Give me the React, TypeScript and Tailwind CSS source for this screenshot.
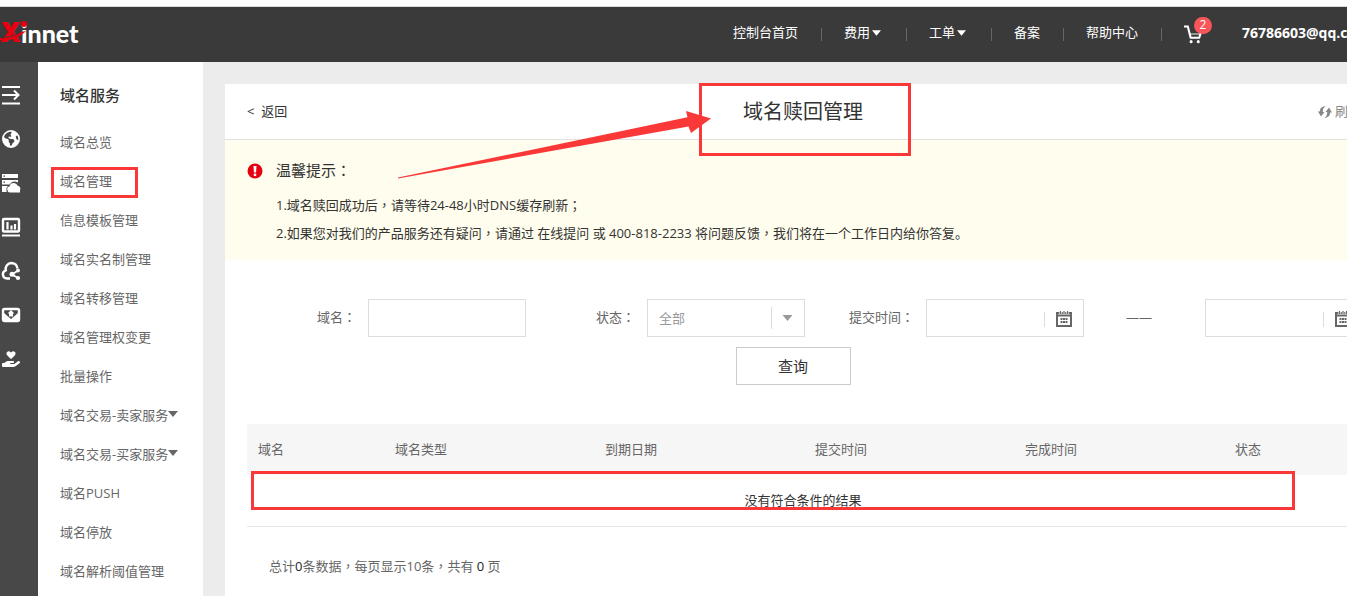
import type { ReactNode } from "react";
import { FaEarthAmericas, FaHandHoldingHeart } from "react-icons/fa6";

/* Full-width commas, colons and semicolons are set centred in their box. */
function T({ children }: { children: string }) {
  return (
    <>
      {children.split(/([，：；])/).map((part, i) =>
        /^[，：；]$/.test(part) ? (
          <span key={i} lang="zh-Hant" className="font-['Noto_Sans_CJK_TC',sans-serif]">
            {part}
          </span>
        ) : (
          part
        ),
      )}
    </>
  );
}

function Caret({ className }: { className: string }) {
  return (
    <svg viewBox="0 0 10 6" className={className} aria-hidden="true">
      <path d="M0 0h10L5 6z" fill="currentColor" />
    </svg>
  );
}

function Logo() {
  return (
    <a href="#" className="relative flex h-8 items-center">
      <span className="w-[21px] font-['Inter',sans-serif] text-[27px] leading-8 font-black text-[#e60012]">X</span>
      <span className="font-['Lato',sans-serif] text-[25px] leading-8 font-black text-white">innet</span>
      <svg viewBox="0 0 30 32" className="absolute top-0 left-0 h-8 w-[30px]" aria-hidden="true">
        <path d="M0 21c9 1 16-2 21-6l5-1C19 21 9 25 0 23z" fill="#e60012" />
        <path d="M0 20c9 1 16-2 21-6" fill="none" stroke="#3a3a3a" strokeWidth="0.800" />
        <circle cx="24" cy="7" r="3" fill="#e60012" />
      </svg>
    </a>
  );
}

const railIcons: { label: string; icon: ReactNode }[] = [
  {
    label: "展开",
    icon: (
      <svg viewBox="0 0 20 20" className="size-5" fill="none" stroke="currentColor" strokeWidth="2">
        <path d="M1 2h18M1 18.500h18M1 10h16M13 5.500l4.500 4.500-4.500 4.500" />
      </svg>
    ),
  },
  { label: "域名", icon: <FaEarthAmericas className="size-5 p-px" /> },
  {
    label: "主机",
    icon: (
      <svg viewBox="0 0 20 20" className="size-5" fill="currentColor">
        <path d="M1 1h16v4H1zM1 7h16v2.500c-3-2-7-1-8 2H1zM1 13h6c-1.500 1-2 3-1.300 6H1z" />
        <path d="M9 19.500a3.200 3.200 0 0 1-.3-6.300 4.200 4.200 0 0 1 8-.4c2.300.4 3.300 2.600 2.300 4.600v2.100z" />
        <path d="M2.500 2.500h1.500v1.200H2.500zM2.500 8.500h1.500v1.200H2.500z" fill="#484848" />
      </svg>
    ),
  },
  {
    label: "网站",
    icon: (
      <svg viewBox="0 0 20 20" className="size-5" fill="none" stroke="currentColor">
        <rect x="2" y="2" width="16" height="12.500" rx="1" strokeWidth="2.400" />
        <path d="M6.500 5v7.500M10.500 8.500v4M14 7v5.500" strokeWidth="2.200" />
        <path d="M1 18.500h18" strokeWidth="2" />
      </svg>
    ),
  },
  {
    label: "云服务",
    icon: (
      <svg viewBox="0 0 20 20" className="size-5" fill="none" stroke="currentColor" strokeWidth="2.400">
        <path d="M9 17.500H6a4.200 4.200 0 0 1-1.200-8.200A6 6 0 0 1 10 2c3.500 0 6 2 6.500 5.500" />
        <path d="M17 9.500l-6 4 6 3.500" strokeWidth="1.800" />
        <circle cx="17" cy="9.500" r="1.900" fill="currentColor" stroke="none" />
        <circle cx="11" cy="13.300" r="2.500" fill="currentColor" stroke="none" />
        <circle cx="17" cy="17" r="2.100" fill="currentColor" stroke="none" />
      </svg>
    ),
  },
  {
    label: "邮箱",
    icon: (
      <svg viewBox="0 0 20 20" className="size-5" fill="none">
        <rect x="2" y="4" width="16" height="12" rx="1.500" stroke="currentColor" strokeWidth="2.400" />
        <path d="M3 8l7 6 7-6v8H3z" fill="currentColor" />
        <path d="M10 5l3.500 3.500H12V11.500H8V8.500H6.500z" fill="currentColor" />
      </svg>
    ),
  },
  { label: "客户关怀", icon: <FaHandHoldingHeart className="size-5 p-px" /> },
];

const menu = [
  { name: "域名总览" },
  { name: "域名管理", marked: true },
  { name: "信息模板管理" },
  { name: "域名实名制管理" },
  { name: "域名转移管理" },
  { name: "域名管理权变更" },
  { name: "批量操作" },
  { name: "域名交易-卖家服务", more: true },
  { name: "域名交易-买家服务", more: true },
  { name: "域名PUSH" },
  { name: "域名停放" },
  { name: "域名解析阈值管理" },
];

const topNav = [
  { name: "控制台首页" },
  { name: "费用", more: true },
  { name: "工单", more: true },
  { name: "备案" },
  { name: "帮助中心" },
];

function TopBar() {
  return (
    <header className="flex h-14 items-center border-t border-[#d5d8dc] bg-[#3a3a3a] pb-1 text-white">
      <Logo />
      <nav className="ml-auto flex items-center">
        {topNav.map((item) => (
          <a
            key={item.name}
            href="#"
            className="flex items-center pl-[22px] after:mt-1 after:ml-[23px] after:h-[13px] after:w-px after:bg-[#666]"
          >
            {item.name}
            {item.more && <Caret className="mr-0.5 ml-0.5 h-[6px] w-[9px]" />}
          </a>
        ))}
        <a href="#" aria-label="购物车" className="relative ml-[22px] h-5 w-5">
          <svg viewBox="0 0 20 20" className="mt-0.5 size-[19px]" fill="none" stroke="currentColor" strokeWidth="2.200">
            <path d="M0 1.500h4l3 12h9l2.500-7.500" />
            <path d="M6 9.500h11" strokeWidth="1" />
            <circle cx="7.500" cy="17.500" r="1.600" fill="currentColor" stroke="none" />
            <circle cx="15" cy="17.500" r="1.600" fill="currentColor" stroke="none" />
          </svg>
          <span className="absolute -top-1.5 left-[10px] flex h-[17px] w-[18px] items-center justify-center rounded-full bg-[#fa5558] text-xs">
            2
          </span>
        </a>
        <a href="#" className="ml-[38px] w-[161px] text-sm font-bold">
          76786603@qq.com
        </a>
      </nav>
    </header>
  );
}

function Rail() {
  return (
    <nav className="flex w-[38px] shrink-0 flex-col bg-[#484848] pt-[11px] text-white">
      {railIcons.map((r) => (
        <a key={r.label} href="#" aria-label={r.label} className="flex h-11 items-center pl-px">
          {r.icon}
        </a>
      ))}
    </nav>
  );
}

function Sidebar() {
  return (
    <aside className="w-[165px] shrink-0 bg-white pt-[5px] pb-1">
      <h2 className="flex h-14 items-center pl-[22px] text-[15px] font-medium text-[#333]">域名服务</h2>
      <ul>
        {menu.map((m) => (
          <li key={m.name} className="relative">
            <a href="#" className="flex h-[39px] items-center pt-px pl-[22px] whitespace-nowrap">
              {m.name}
              {m.more && <Caret className="mb-1 h-[6px] w-[10px] shrink-0" />}
            </a>
            {m.marked && (
              <span className="pointer-events-none absolute top-[5px] left-[13px] h-[31px] w-[87px] border-3 border-[#fb3838]" />
            )}
          </li>
        ))}
      </ul>
    </aside>
  );
}

function Label({ id, children }: { id: string; children: string }) {
  return (
    <label htmlFor={id} className="w-[121px] shrink-0 pr-3 pb-0.5 text-right">
      <T>{children}</T>
    </label>
  );
}

function DateBox({ id, label }: { id: string; label?: string }) {
  return (
    <div className="flex h-[38px] w-[158px] items-center border border-[#ddd] bg-white">
      <input id={id} aria-label={label} type="text" className="h-full w-[117px] pl-3 outline-none" />
      <button type="button" aria-label="选择日期" className="flex items-center pt-0.5">
        <span className="h-[15px] w-px bg-[#ddd]" />
        <svg viewBox="0 0 16 16" className="ml-[11px] size-4" aria-hidden="true">
          <path d="M1 2h14v13H1z" fill="none" stroke="#666" strokeWidth="2" />
          <path d="M1 4.500h14" stroke="#666" strokeWidth="2" />
          <path d="M4.500 0v3M8 0v3M11.500 0v3" stroke="#fff" strokeWidth="2.400" />
          <path d="M4.500 0v3M8 0v3M11.500 0v3" stroke="#666" strokeWidth="1.200" />
          <path d="M4.500 8h7M4.500 11h7" stroke="#666" strokeWidth="2" strokeDasharray="2 .5" />
        </svg>
      </button>
    </div>
  );
}

function Filters() {
  return (
    <form className="px-[22px] pt-[39px]">
      <div className="-mr-1 grid grid-cols-4">
        <div className="flex items-center">
          <Label id="domain">域名：</Label>
          <input id="domain" type="text" className="h-[38px] w-[158px] border border-[#ddd] bg-white px-3 outline-none" />
        </div>
        <div className="flex items-center">
          <Label id="status">状态：</Label>
          <div className="relative">
            <select
              id="status"
              className="h-[38px] w-[158px] appearance-none border border-[#ddd] bg-white pt-0.5 pl-[11px] text-[#999] outline-none"
            >
              <option>全部</option>
            </select>
            <span className="pointer-events-none absolute top-2 right-3 flex h-[22px] items-center border-l border-[#ddd] pl-[10px] text-[#999]">
              <Caret className="h-[6px] w-[11px]" />
            </span>
          </div>
        </div>
        <div className="flex items-center">
          <Label id="from">提交时间：</Label>
          <DateBox id="from" />
        </div>
        <div className="flex items-center">
          <span className="w-[121px] shrink-0 pr-[11px] text-center">——</span>
          <DateBox id="to" label="截止时间" />
        </div>
      </div>
      <div className="mt-[10px] flex justify-center pr-5">
        <button type="button" className="h-[38px] w-[115px] border border-[#ccc] bg-white text-[15px] text-[#333]">
          查询
        </button>
      </div>
    </form>
  );
}

const columns = ["域名", "域名类型", "到期日期", "提交时间", "完成时间", "状态"];

function Results() {
  return (
    <div className="relative mx-[22px] mt-[39px]">
      <table className="w-full table-fixed border-collapse text-left">
        <colgroup>
          <col className="w-[137px]" />
          <col className="w-[210px]" />
          <col className="w-[210px]" />
          <col className="w-[210px]" />
          <col className="w-[210px]" />
          <col />
        </colgroup>
        <thead className="bg-[#f6f6f6]">
          <tr className="h-[51px]">
            {columns.map((c) => (
              <th key={c} className="pt-px pl-[11px] font-normal">
                {c}
              </th>
            ))}
          </tr>
        </thead>
        <tbody>
          <tr className="h-[51px] border-b border-[#e8e8e8]">
            <td colSpan={6} className="pt-px text-center text-[#333]">
              没有符合条件的结果
            </td>
          </tr>
        </tbody>
      </table>
      <span className="pointer-events-none absolute top-[47px] left-1 h-[39px] w-[1044px] border-3 border-[#fb3838]" />
    </div>
  );
}

function PageTitle() {
  return (
    <div className="flex h-14 items-center border-b border-[#e0e0e0] px-[22px] text-[#333]">
      <a href="#" className="flex-1">
        &lt;&nbsp; 返回
      </a>
      <div className="relative">
        <h1 className="text-xl">域名赎回管理</h1>
        <span className="pointer-events-none absolute -top-[15px] -left-[44px] h-[73px] w-[212px] border-3 border-[#fb3838]" />
        <svg
          viewBox="0 0 314 68"
          className="pointer-events-none absolute top-[13px] -left-[345px] h-[68px] w-[314px]"
          aria-hidden="true"
        >
          <path d="M0 66.500L289.500 6.300 288 0 313 7.500 293 22 290.500 15.500 0 67.500z" fill="#fb3838" />
        </svg>
      </div>
      <div className="flex flex-1 justify-end">
        <button type="button" className="-mr-0.5 flex items-center gap-[3px] text-[#888]">
          <svg viewBox="0 0 14 12" className="h-3 w-[14px]" fill="currentColor" aria-hidden="true">
            <path d="M7.500 0C3.500.5 2 2.500 1.800 5.500H0L3 10.500 6.500 6H4.800C4.800 3.500 5.500 1.500 7.500 0z" />
            <path d="M6.500 12c4-.5 5.500-2.500 5.700-5.500H14L11 1.500 7.500 6h1.700c0 2.500-.7 4.500-2.700 6z" />
          </svg>
          刷新
        </button>
      </div>
    </div>
  );
}

function Notice() {
  return (
    <section className="flex bg-[#fffded] px-[22px] pt-4 pb-[13px] text-[#333]">
      <svg viewBox="0 0 16 16" className="mt-[7px] size-4" aria-hidden="true">
        <circle cx="8" cy="8" r="7.500" fill="#e60012" />
        <path d="M6.500 3h3L9.100 9.500H6.900z" fill="#fff" />
        <circle cx="8" cy="11.800" r="1.400" fill="#fff" />
      </svg>
      <div className="ml-[13px] leading-7">
        <h3 className="mb-[7px] text-[15px] leading-7">
          <T>温馨提示：</T>
        </h3>
        <p>
          <T>1.域名赎回成功后，请等待24-48小时DNS缓存刷新；</T>
        </p>
        <p>
          <T>2.如果您对我们的产品服务还有疑问，请通过 在线提问 或 400-818-2233 将问题反馈，我们将在一个工作日内给你答复。</T>
        </p>
      </div>
    </section>
  );
}

export default function App() {
  return (
    <div
      lang="zh-CN"
      className="overflow-x-hidden bg-white font-['Open_Sans','Noto_Sans_CJK_SC',sans-serif] text-[13px] text-[#666]"
    >
      <div className="flex min-h-screen min-w-[1403px] flex-col pt-[6px]">
        <TopBar />
        <div className="flex grow bg-[#ececec]">
          <Rail />
          <Sidebar />
          <main className="mx-[22px] mt-[22px] min-w-0 grow bg-white">
            <PageTitle />
            <Notice />
            <Filters />
            <Results />
            <p className="mt-[29px] px-11">
              <T>总计</T>
              <span className="text-[#222]">0</span>
              <T>条数据，每页显示10条，共有 </T>
              <span className="text-[#222]">0</span> 页
            </p>
          </main>
        </div>
      </div>
    </div>
  );
}
